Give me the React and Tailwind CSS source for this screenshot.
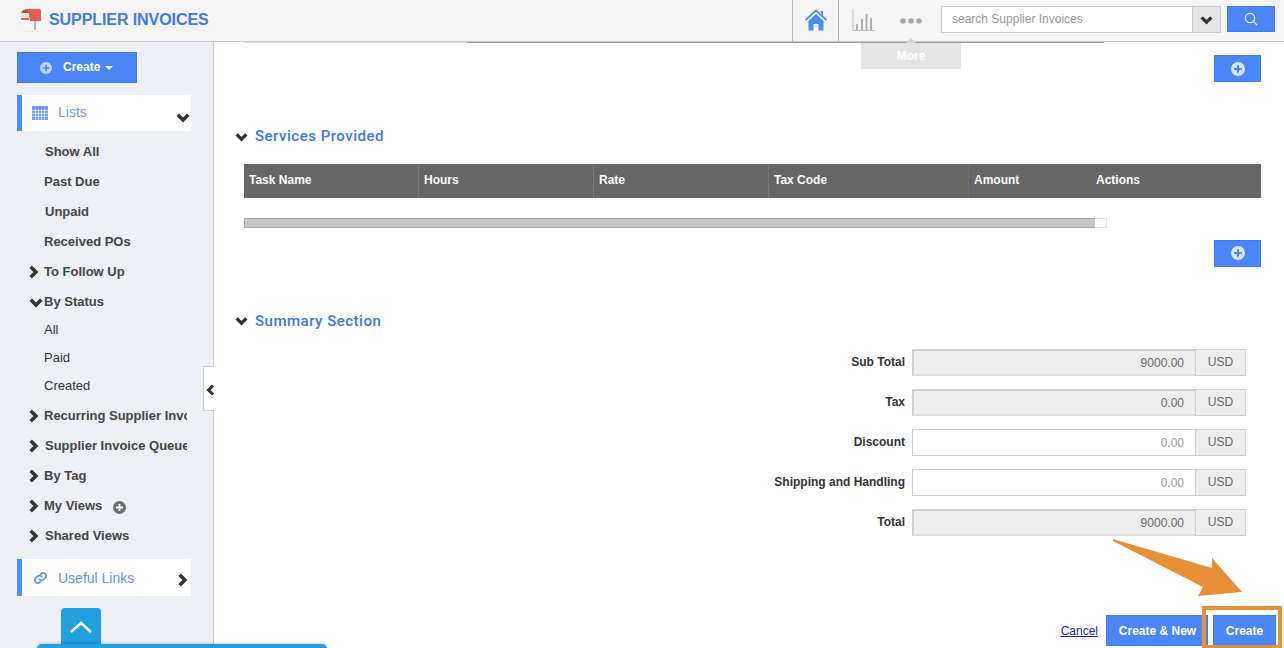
import React from "react";

const sans = "font-['Liberation_Sans',Arial,sans-serif]";
const rob = "font-['Roboto',sans-serif]";

function Chev({ dir = "right", size = 12, w = 3, cls = "text-[#333]" }) {
  const d = { right: "M4 1.500 8.500 6 4 10.500", down: "M1.500 4 6 8.500 10.500 4", left: "M8 1.500 3.500 6 8 10.500" }[dir];
  return (
    <svg width={size} height={size} viewBox="0 0 12 12" className={`shrink-0 ${cls}`} fill="none" stroke="currentColor" strokeWidth={w}>
      <path d={d} />
    </svg>
  );
}

function PlusCircle({ size = 14, fg = "#4a86f0", bg = "#d5e3fb" }) {
  return (
    <svg width={size} height={size} viewBox="0 0 14 14" className="shrink-0">
      <circle cx="7" cy="7" r="7" fill={bg} />
      <path d="M7 3.200v7.600M3.200 7h7.600" stroke={fg} strokeWidth="2" />
    </svg>
  );
}

function SideItem({ children, chev, h = "h-[30px]", bold = true, extra, pad }) {
  return (
    <div className={`flex items-center ${h} relative ${pad || "pl-[44px]"} w-[187px] overflow-hidden`}>
      {chev && (
        <span className={`absolute top-1/2 -translate-y-1/2 ${chev === "down" ? "left-[29px]" : "left-[26px]"}`}>
          <Chev dir={chev} size={14} />
        </span>
      )}
      <span className={`text-[13px] whitespace-nowrap ${bold ? "font-bold text-[#444]" : "text-[#333]"}`}>{children}</span>
      {extra}
    </div>
  );
}

function AddButton() {
  return (
    <div className="flex justify-end">
      <button className="w-[47px] h-[27px] bg-[#4a86f5] border border-[#3f7be8] flex items-center justify-center">
        <PlusCircle size={14} fg="#4a86f5" />
      </button>
    </div>
  );
}

function SectionHead({ title }) {
  return (
    <div className="flex items-center gap-[7px] -ml-[1px]">
      <Chev dir="down" size={13} cls="text-[#333]" />
      <span className={`${rob} text-[15px] font-medium tracking-[0.5px] text-[#3b78e7]`}>{title}</span>
    </div>
  );
}

function SumRow({ label, value, disabled }) {
  return (
    <div className="flex items-center justify-end h-[27px] mb-[13px]">
      <span className="text-[12px] font-bold text-[#333] mr-[7px] -mt-[2px]">{label}</span>
      <div className={`w-[283px] h-[27px] border-[#cfcfcf] border-r-0 text-right pr-[11px] text-[12px] ${disabled ? "leading-[24px] border-2 bg-[#eeeeee] text-[#666] border-b-[#ddd]" : "leading-[26px] border bg-white text-[#999]"}`}>
        {value}
      </div>
      <div className="w-[51px] h-[27px] bg-[#eeeeee] border border-[#cfcfcf] text-center text-[12px] leading-[24px] text-[#666]">USD</div>
    </div>
  );
}

const cols = [
  ["Task Name", 175],
  ["Hours", 175],
  ["Rate", 175],
  ["Tax Code", 200],
  ["Amount", 122],
  ["Actions", 170],
];

export default function App() {
  return (
    <div className={`${sans} relative w-[1284px] h-[648px] overflow-hidden bg-white`}>
      {/* Header */}
      <header className="h-[41px] bg-[#f5f5f5] flex items-stretch border-b border-[#c9c9c9] box-content">
        <div className="flex items-center pl-[20px] w-[792px]">
          <svg width="22" height="26" viewBox="0 0 22 26" className="-mt-[3px]">
            <path d="M1 7h8v7H1z" fill="#e8e8e8" />
            <path d="M1 12h8v2H1z" fill="#e46a5d" />
            <path d="M8 3h11a2 2 0 0 1 2 2v10h-11z" fill="#ea5a4e" />
            <path d="M1 7c1-3 4-4 7-4l1 4z" fill="#c9493f" />
            <path d="M14 15h2v9h-2z" fill="#b8b8b8" />
            <path d="M3 26h15" stroke="#f0dcc0" strokeWidth="1" />
          </svg>
          <span className="ml-[7px] text-[16px] font-bold text-[#3f7be8] tracking-[-0.08px] -mt-[2px]">SUPPLIER INVOICES</span>
        </div>
        <div className="w-[47px] border-x border-[#b5b5b5] flex items-center justify-center bg-[#f5f5f5]">
          <svg width="22" height="22" viewBox="0 0 22 22" className="-mt-[2px]">
            <path d="M0.500 11 11 1.500 21.500 11" fill="none" stroke="#4a8df5" strokeWidth="1.700" />
            <path d="M15 2h3v5z" fill="#4a8df5" />
            <path d="M3.500 12 11 5l7.500 7v9.500h-5V15h-5v6.500h-5z" fill="#4a8df5" />
          </svg>
        </div>
        <div className="w-[48px] flex items-center justify-center pl-[1px]">
          <svg width="23" height="23" viewBox="0 0 23 23" fill="none">
            <path d="M1 0v21.500h22" stroke="#bdbdbd" strokeWidth="1" />
            <path d="M5 15v6M10 10v11M14.500 5v16M19 9v12" stroke="#b0b0b0" strokeWidth="2" />
          </svg>
        </div>
        <div className="w-[54px] flex items-center justify-center pr-[7px]">
          <svg width="22" height="6" viewBox="0 0 22 6" fill="#a9a9a9">
            <circle cx="3" cy="3" r="2.800" />
            <circle cx="11" cy="3" r="2.800" />
            <circle cx="19" cy="3" r="2.800" />
          </svg>
        </div>
        <div className="flex items-start pt-[6px]">
          <div className="w-[252px] h-[27px] bg-white border border-[#c9c9c9] pl-[10px] text-[12px] leading-[25px] text-[#999]">search Supplier Invoices</div>
          <div className="w-[28px] h-[27px] bg-[#e6e6e6] border border-l-0 border-[#c9c9c9] flex items-center justify-center">
            <Chev dir="down" size={13} />
          </div>
          <button className="ml-[6px] w-[48px] h-[26px] bg-[#4a86f5] border border-[#3f7be8] flex items-center justify-center">
            <svg width="14" height="14" viewBox="0 0 14 14" fill="none" stroke="#e8f0ff" strokeWidth="1.200">
              <circle cx="6" cy="6" r="4.700" />
              <path d="m9.500 9.500 3.500 3.500" />
            </svg>
          </button>
        </div>
      </header>

      <div className="flex h-[606px]">
        {/* Sidebar */}
        <aside className="w-[214px] shrink-0 bg-[#edf0f5] border-r border-[#c9c9c9] pl-[17px] pt-[10px] relative">
          <button className="w-[120px] h-[31px] bg-[#4a86f5] border border-[#3f7be8] flex items-center text-white pl-[22px]">
            <PlusCircle size={12} fg="#4a86f5" bg="#bcd3fa" />
            <span className="ml-[11px] text-[12px] font-bold -mt-[2px]">Create</span>
            <span className="ml-[5px] mt-[1px] w-0 h-0 border-x-[4px] border-x-transparent border-t-[4px] border-t-white" />
          </button>

          <div className="mt-[12px] w-[174px] h-[36px] bg-white border-l-[5px] border-[#4f8ff7] flex items-center relative">
            <svg width="16" height="14" viewBox="0 0 16 14" className="ml-[10px]">
              <rect width="16" height="14" fill="#6e9df2" />
              <path d="M0 4.500h16M0 7.500h16M0 10.500h16M3.500 3v11M6.500 3v11M9.500 3v11M12.500 3v11" stroke="#fff" strokeWidth="0.700" />
            </svg>
            <span className="ml-[10px] text-[14px] text-[#6e9df2] -mt-[2px]">Lists</span>
            <span className="absolute right-[1px] top-[15px]">
              <Chev dir="down" size={14} />
            </span>
          </div>

          <div className="-ml-[17px] mt-[6px]">
            <SideItem pad="pl-[45px]">Show All</SideItem>
            <SideItem>Past Due</SideItem>
            <SideItem pad="pl-[45px]">Unpaid</SideItem>
            <SideItem>Received POs</SideItem>
            <SideItem chev="right">To Follow Up</SideItem>
            <SideItem chev="down">By Status</SideItem>
            <div className="-mt-[1px]" />
            <SideItem h="h-[28px]" bold={false}>All</SideItem>
            <SideItem h="h-[28px]" bold={false}>Paid</SideItem>
            <SideItem h="h-[28px]" bold={false}>Created</SideItem>
            <div className="mt-[1px]" />
            <SideItem chev="right">Recurring Supplier Invoices</SideItem>
            <SideItem chev="right" pad="pl-[45px]">Supplier Invoice Queue</SideItem>
            <SideItem chev="right">By Tag</SideItem>
            <SideItem chev="right" extra={<span className="ml-[11px] mt-[3px]"><PlusCircle size={13} fg="#fff" bg="#6f6f6f" /></span>}>My Views</SideItem>
            <SideItem chev="right" pad="pl-[45px]">Shared Views</SideItem>
          </div>

          <div className="mt-[8px] w-[174px] h-[37px] bg-white border-l-[5px] border-[#4f8ff7] flex items-center relative">
            <svg width="15" height="14" viewBox="0 0 24 24" className="ml-[11px]" fill="none" stroke="#5b93f5" strokeWidth="3" strokeLinecap="round">
              <path d="M10 14a5 5 0 0 0 7.500.5l3-3a5 5 0 0 0-7-7l-1.700 1.700" />
              <path d="M14 10a5 5 0 0 0-7.500-.5l-3 3a5 5 0 0 0 7 7l1.700-1.700" />
            </svg>
            <span className="ml-[10px] mt-[1px] text-[14px] text-[#5b93f5]">Useful Links</span>
            <span className="absolute right-[2px] top-[14px]">
              <Chev dir="right" size={14} />
            </span>
          </div>
        </aside>

        {/* Main */}
        <main className="flex-1 relative pl-[22px] pr-[23px]">
          <div className="absolute left-[30px] top-0 w-[223px] h-px bg-[#d8d8d8]" />
          <div className="absolute left-[253px] top-0 w-[637px] h-[1px] bg-[#9a9a9a]" />
          <div className="pt-[13px]">
            <AddButton />
          </div>
          <div className="mt-[43px]">
            <SectionHead title="Services Provided" />
          </div>
          <div className="ml-[8px] mt-[16px] h-[34px] bg-[#666666] flex items-stretch">
            {cols.map(([c, w], i) => (
              <div key={c} style={{ width: w }} className={`flex items-center pl-[5px] pb-[2px] text-[12px] font-bold text-white ${i < 3 ? "border-r border-[#7a7a7a]" : i === 3 ? "border-r border-[#6f6f6f]" : ""}`}>
                {c}
              </div>
            ))}
          </div>
          <div className="ml-[8px] mt-[20px] w-[863px] h-[10px] bg-white border border-[#e4e4e4] border-l-0">
            <div className="w-[851px] h-[10px] -mt-px bg-[#c6c6c6] border border-[#aaaaaa] border-r-0" />
          </div>
          <div className="mt-[12px]">
            <AddButton />
          </div>
          <div className="mt-[43px]">
            <SectionHead title="Summary Section" />
          </div>
          <div className="mt-[17px] mr-[15px]">
            <SumRow label="Sub Total" value="9000.00" disabled />
            <SumRow label="Tax" value="0.00" disabled />
            <SumRow label="Discount" value="0.00" />
            <SumRow label="Shipping and Handling" value="0.00" />
            <SumRow label="Total" value="9000.00" disabled />
          </div>
          <div className="flex items-center justify-end mt-[79px] -mr-[15px] relative">
            <a className="text-[12px] text-[#2020c0] underline mr-[8px]">Cancel</a>
            <button className="w-[102px] h-[31px] bg-[#4a86f5] border border-[#3f7be8] text-white text-[12px] font-bold pl-[1px]">Create &amp; New</button>
            <button className="ml-[5px] w-[63px] h-[31px] bg-[#4a86f5] border border-[#3f7be8] text-white text-[12px] font-bold">Create</button>
          </div>
        </main>
      </div>

      {/* Overlays */}
      <div className="absolute left-[861px] top-[43px] w-[100px] h-[26px] bg-[#e5e5e5] text-center text-[12px] font-bold leading-[26px] text-white">More</div>
      <div className="absolute left-[906px] top-[38px] w-0 h-0 border-x-[5px] border-x-transparent border-b-[5px] border-b-[#d5d5d5]" />

      <div className="absolute left-[203px] top-[366px] w-[11px] h-[45px] bg-white border border-r-0 border-[#c9c9c9] flex items-center justify-center pl-[3px] pt-[2px]">
        <Chev dir="left" size={12} w={3} cls="text-[#333]" />
      </div>

      <div className="absolute left-[61px] top-[608px] w-[40px] h-[37px] bg-[#219fdf] rounded-t-[4px] flex items-center justify-center">
        <svg width="24" height="14" viewBox="0 0 24 14" fill="none" stroke="#fff" strokeWidth="2.500">
          <path d="M2 12 12 3l10 9" />
        </svg>
      </div>
      <div className="absolute left-[37px] top-[644px] w-[290px] h-[6px] bg-[#219fdf] rounded-t-[5px] shadow-[0_-1px_3px_rgba(0,0,0,0.2)]" />

      <svg className="absolute left-[1112px] top-[538px]" width="134" height="60" viewBox="0 0 134 60">
        <path d="M1 1 100 30V20l30 34-44 4 5-9L1 3z" fill="#e69138" />
      </svg>
      <div className="absolute left-[1202px] top-[606px] w-[80px] h-[42px] border-[4px] border-[#e69138] border-b-[3px]" />
    </div>
  );
}
